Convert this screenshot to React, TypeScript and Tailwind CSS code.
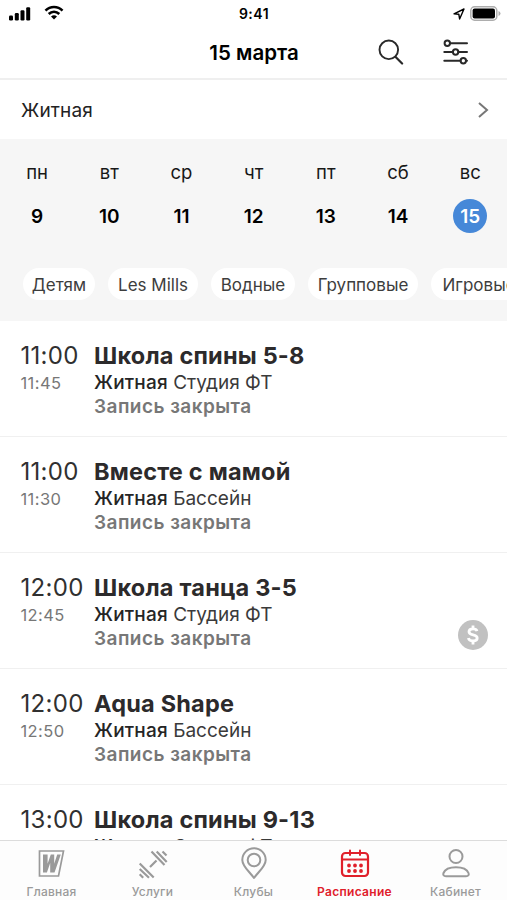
import type { ReactNode } from "react";

const days = [
  ["пн", 9],
  ["вт", 10],
  ["ср", 11],
  ["чт", 12],
  ["пт", 13],
  ["сб", 14],
  ["вс", 15],
] as const;

const chips = [
  ["Детям", "w-[72px]"],
  ["Les Mills", "w-[90px]"],
  ["Водные", "w-[84px]"],
  ["Групповые", "w-[110px]"],
  ["Игровые", "w-[96px]"],
];

type Lesson = { start: string; end: string; title: string; room: string; paid?: boolean };

const lessons: Lesson[] = [
  { start: "11:00", end: "11:45", title: "Школа спины 5-8", room: "Студия ФТ" },
  { start: "11:00", end: "11:30", title: "Вместе с мамой", room: "Бассейн" },
  { start: "12:00", end: "12:45", title: "Школа танца 3-5", room: "Студия ФТ", paid: true },
  { start: "12:00", end: "12:50", title: "Aqua Shape", room: "Бассейн" },
  { start: "13:00", end: "13:45", title: "Школа спины 9-13", room: "Студия ФТ" },
];

function StatusBar() {
  return (
    <div className="grid h-[27px] shrink-0 grid-cols-3 items-center pl-[9px] pr-[6px]">
      <div className="flex items-center gap-[13px]">
        <svg width="22" height="14" viewBox="0 0 22 14">
          <rect x="0" y="8.5" width="4" height="5" rx="1.2" />
          <rect x="5.8" y="6" width="4" height="7.5" rx="1.2" />
          <rect x="11.5" y="3.2" width="4" height="10.3" rx="1.2" />
          <rect x="17.2" y="0.3" width="4" height="13.2" rx="1.2" />
        </svg>
        <svg className="-mt-[2px]" width="20" height="15" viewBox="0 0 20 15" fill="none" stroke="black" strokeWidth="2.6">
          <path d="M1.5 5.6C6.3 .8 13.7 .8 18.5 5.6" />
          <path d="M4.7 9C7.8 6.1 12.2 6.1 15.3 9" />
          <path d="M7 11.4Q10 9 13 11.4L10 14.4Z" fill="black" stroke="none" />
        </svg>
      </div>
      <div className="pr-[2px] text-center text-[14px] font-semibold tracking-[0.5px]">9:41</div>
      <div className="flex items-center justify-end gap-[5px]">
        <svg width="12" height="12" viewBox="0 0 12 12" fill="none" stroke="black" strokeWidth="1.4" strokeLinejoin="round">
          <path d="M1 5.8 11 1 6.6 11 5.8 6.2Z" />
        </svg>
        <svg width="31" height="15" viewBox="0 0 31 15">
          <rect x=".8" y=".8" width="26" height="13.4" rx="3.8" fill="white" stroke="#adadad" strokeWidth="1.5" />
          <rect x="2.6" y="2.6" width="22.4" height="9.8" rx="2" />
          <path d="M28.5 5v5q2-.7 2-2.5t-2-2.5Z" fill="#adadad" />
        </svg>
      </div>
    </div>
  );
}

function Header() {
  return (
    <header className="grid h-[53px] shrink-0 grid-cols-[1fr_auto_1fr] items-center border-b-2 border-[#efefef]">
      <span />
      <h1 className="pl-[1px] text-[20.5px] font-semibold leading-6">15 марта</h1>
      <div className="flex items-center justify-end gap-[39px] pr-[38px]">
        <svg className="-mt-[2px]" width="26" height="26" viewBox="0 0 26 26" fill="none" stroke="#292929" strokeWidth="1.9" strokeLinecap="round">
          <circle cx="10.8" cy="10.8" r="9.3" />
          <path d="m17.4 17.8 6.7 6.7" strokeWidth="2.2" />
        </svg>
        <svg className="-mt-[2px]" width="26" height="26" viewBox="0 0 26 26" fill="none" stroke="#292929" strokeWidth="2" strokeLinecap="round">
          <circle cx="4.3" cy="4.2" r="2.7" />
          <path d="M7 4.2H24M1.3 13h8.5M15.4 13h8.6M1.3 21.8h16.2M23 21.8h1" />
          <circle cx="12.6" cy="13" r="2.7" />
          <circle cx="20.3" cy="21.8" r="2.7" />
        </svg>
      </div>
    </header>
  );
}

function LessonRow({ start, end, title, room, paid }: Lesson) {
  return (
    <li className="flex h-[116px] shrink-0 border-b border-[#f0f0f0] pl-[20.5px] pr-[19px] pt-[20px]">
      <div className="w-[73.5px] shrink-0">
        <div className="text-[24px] leading-[30px] tracking-[0.3px] text-[#303030]">{start}</div>
        <div className="text-[16.5px] leading-[24px] tracking-[0.4px] text-[#777]">{end}</div>
      </div>
      <div className="grow whitespace-nowrap">
        <h2 className="text-[23.5px] font-bold leading-[30px] tracking-[0.2px] text-[#2c2a2b]">{title}</h2>
        <p className="text-[19px] leading-[24px] text-[#3a3a3a]">
          <span className="font-medium tracking-[0.2px] text-[#252525]">Житная</span> {room}
        </p>
        <p className="text-[19px] font-semibold leading-[24px] tracking-[0.45px] text-[#777]">Запись закрыта</p>
      </div>
      {paid && (
        <svg className="mt-[47px] shrink-0" width="30" height="30" viewBox="0 0 30 30" fill="none">
          <circle cx="15" cy="15" r="15" fill="#c1c1c1" />
          <path d="M19 11.2Q18.3 8.9 15 8.9c-2.4 0-4 1.1-4 2.9 0 4.4 8.2 1.8 8.2 6.2 0 1.9-1.6 3-4.2 3-2.7 0-4.2-1-4.6-3M15 5.5v3.5M15 21v3.5" stroke="white" strokeWidth="2.8" />
        </svg>
      )}
    </li>
  );
}

function Tab({ label, active, children }: { label: string; active?: boolean; children: ReactNode }) {
  return (
    <div className={`flex w-[101px] flex-col items-center pt-[6px] ${active ? "text-[#e0202b]" : "text-[#9a9a9a]"}`}>
      <svg width="34" height="34" viewBox="0 0 34 34" fill="none" stroke="currentColor" strokeWidth="2" strokeLinecap="round" strokeLinejoin="round">
        {children}
      </svg>
      <span className={`mt-[3px] text-[12px] leading-[16px] ${active ? "font-semibold tracking-[0.3px]" : "font-medium tracking-[0.2px]"}`}>{label}</span>
    </div>
  );
}

export default function App() {
  return (
    <div className="flex h-[900px] w-[507px] flex-col overflow-hidden bg-white font-['Inter','Liberation_Sans',sans-serif] text-black">
      <StatusBar />
      <Header />
      <div className="flex h-[59px] shrink-0 items-center justify-between pl-[21px] pr-[18px] text-[19px] tracking-[0.15px] text-[#222]">
        <span className="pt-[3px]">Житная</span>
        <svg width="12" height="16" viewBox="0 0 12 16" fill="none" stroke="#777" strokeWidth="2">
          <path d="m2 1 8 7-8 7" />
        </svg>
      </div>
      <section className="h-[182px] shrink-0 bg-[#f6f6f6]">
        <div className="flex pl-[1px]">
          {days.map(([name, date]) => (
            <div key={date} className="flex w-[72.2px] shrink-0 flex-col items-center pt-[20px]">
              <span className="text-[18.5px] leading-[26px] text-[#181818]">{name}</span>
              <span
                className={`mt-[14px] flex size-[34px] items-center justify-center rounded-full pt-[2px] text-[19px] font-semibold ${
                  date === 15 ? "bg-[#4688d8] text-white" : ""
                }`}
              >
                {date}
              </span>
            </div>
          ))}
        </div>
        <div className="mt-[35px] flex gap-[13px] overflow-hidden pl-[23px]">
          {chips.map(([label, width]) => (
            <span key={label} className={`flex h-[32px] shrink-0 items-center justify-center rounded-full bg-white pt-[3px] text-[17px] text-[#3d3d3d] ${width}`}>
              {label}
            </span>
          ))}
        </div>
      </section>
      <ul className="flex min-h-0 grow flex-col overflow-hidden">
        {lessons.map((lesson) => (
          <LessonRow key={lesson.title} {...lesson} />
        ))}
      </ul>
      <nav className="flex h-[60px] shrink-0 border-t border-[#dcdcdc] bg-[#fdfdfd] pl-[1px]">
        <Tab label="Главная">
          <path d="M4.5 4h24l-5 25H4.5Z" strokeWidth="1.7" strokeLinejoin="miter" />
          <path d="M8 7.5h4.6v9.3l3.2-9.3h3.4v9.3l3-9.3h3.6L19.5 25.500h-4.3V16l-3.3 9.5H8Z" fill="currentColor" stroke="none" />
        </Tab>
        <Tab label="Услуги">
          <path d="m14 20 6.5-6.5M15.5 4.5l13 13.5M20.7 4.5l10 10.5M26.5 4.5l4 4M3.7 16.5l14 14M3.7 22l9.3 8.700M3.7 27.2l3.5 3.5" strokeWidth="2.2" strokeLinecap="butt" />
        </Tab>
        <Tab label="Клубы">
          <path d="M17 31C12 24 5.3 19.2 5.3 12.9a11.7 11.7 0 0 1 23.4 0C28.7 19.2 22 24 17 31Z" />
          <circle cx="17" cy="13" r="6.3" />
        </Tab>
        <Tab label="Расписание" active>
          <rect x="4" y="6" width="26" height="23" rx="3.5" strokeWidth="2.2" />
          <path d="M4 12.500h26M12 3.5V8M22 3.5V8" />
          <path d="M11 18.5h.01M17 18.5h.01M23 18.5h.01M11 24h.01M17 24h.01M23 24h.01" strokeWidth="3.8" />
        </Tab>
        <Tab label="Кабинет">
          <circle cx="17" cy="9.5" r="6.5" />
          <path d="M7 29.2c-2.5 0-3.2-1.5-2.5-3.2C6 22.2 10.3 20.200 17 20.2s11 2 12.5 5.8c.7 1.7 0 3.2-2.5 3.2Z" />
        </Tab>
      </nav>
    </div>
  );
}
